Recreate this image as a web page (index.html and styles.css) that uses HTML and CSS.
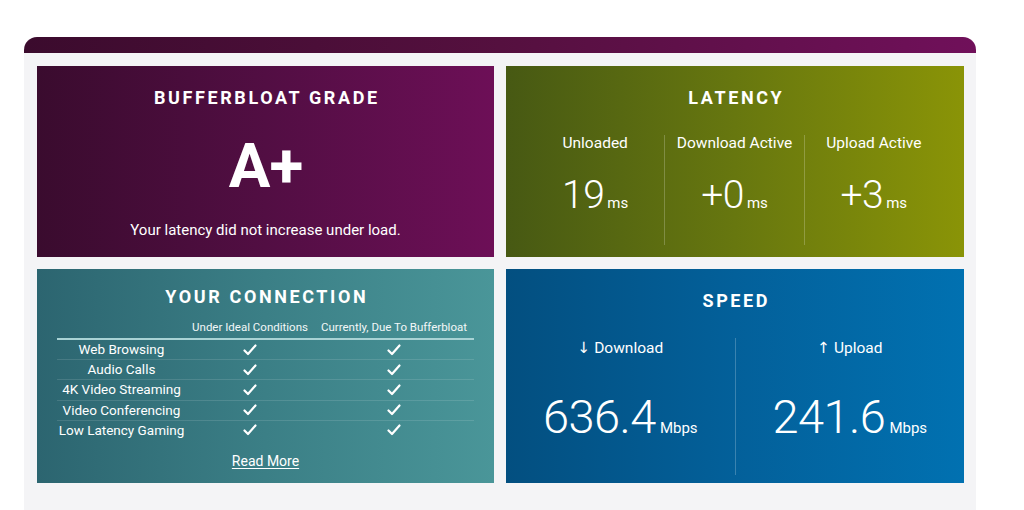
FILE: index.html
```html
<!DOCTYPE html>
<html lang="en">
<head>
<meta charset="utf-8">
<title>Bufferbloat Results</title>
<link rel="stylesheet" href="styles.css">
</head>
<body>
<div class="wrap">
  <div class="topbar"></div>
  <div class="panel">
    <div class="grid">
      <section class="card grade">
        <h2 class="title">BUFFERBLOAT GRADE</h2>
        <div class="big">A+</div>
        <p class="desc">Your latency did not increase under load.</p>
      </section>

      <section class="card latency">
        <h2 class="title">LATENCY</h2>
        <div class="cols three">
          <div class="col">
            <div class="label">Unloaded</div>
            <div class="value">19<span class="unit">ms</span></div>
          </div>
          <div class="col">
            <div class="label">Download Active</div>
            <div class="value">+0<span class="unit">ms</span></div>
          </div>
          <div class="col">
            <div class="label">Upload Active</div>
            <div class="value">+3<span class="unit">ms</span></div>
          </div>
        </div>
      </section>

      <section class="card connection">
        <h2 class="title ctitle">YOUR CONNECTION</h2>
        <div class="table">
          <div class="thead">
            <span></span>
            <span>Under Ideal Conditions</span>
            <span>Currently, Due To Bufferbloat</span>
          </div>
          <div class="trow"><span>Web Browsing</span><span class="ok"><svg viewBox="0 0 14 12" width="14" height="12"><path d="M1.5 6.5 L5 10 L12.5 1.5" fill="none" stroke="#fff" stroke-width="2.2" stroke-linecap="round" stroke-linejoin="round"/></svg></span><span class="ok"><svg viewBox="0 0 14 12" width="14" height="12"><path d="M1.5 6.5 L5 10 L12.5 1.5" fill="none" stroke="#fff" stroke-width="2.2" stroke-linecap="round" stroke-linejoin="round"/></svg></span></div>
          <div class="trow"><span>Audio Calls</span><span class="ok"><svg viewBox="0 0 14 12" width="14" height="12"><path d="M1.5 6.5 L5 10 L12.5 1.5" fill="none" stroke="#fff" stroke-width="2.2" stroke-linecap="round" stroke-linejoin="round"/></svg></span><span class="ok"><svg viewBox="0 0 14 12" width="14" height="12"><path d="M1.5 6.5 L5 10 L12.5 1.5" fill="none" stroke="#fff" stroke-width="2.2" stroke-linecap="round" stroke-linejoin="round"/></svg></span></div>
          <div class="trow"><span>4K Video Streaming</span><span class="ok"><svg viewBox="0 0 14 12" width="14" height="12"><path d="M1.5 6.5 L5 10 L12.5 1.5" fill="none" stroke="#fff" stroke-width="2.2" stroke-linecap="round" stroke-linejoin="round"/></svg></span><span class="ok"><svg viewBox="0 0 14 12" width="14" height="12"><path d="M1.5 6.5 L5 10 L12.5 1.5" fill="none" stroke="#fff" stroke-width="2.2" stroke-linecap="round" stroke-linejoin="round"/></svg></span></div>
          <div class="trow"><span>Video Conferencing</span><span class="ok"><svg viewBox="0 0 14 12" width="14" height="12"><path d="M1.5 6.5 L5 10 L12.5 1.5" fill="none" stroke="#fff" stroke-width="2.2" stroke-linecap="round" stroke-linejoin="round"/></svg></span><span class="ok"><svg viewBox="0 0 14 12" width="14" height="12"><path d="M1.5 6.5 L5 10 L12.5 1.5" fill="none" stroke="#fff" stroke-width="2.2" stroke-linecap="round" stroke-linejoin="round"/></svg></span></div>
          <div class="trow"><span>Low Latency Gaming</span><span class="ok"><svg viewBox="0 0 14 12" width="14" height="12"><path d="M1.5 6.5 L5 10 L12.5 1.5" fill="none" stroke="#fff" stroke-width="2.2" stroke-linecap="round" stroke-linejoin="round"/></svg></span><span class="ok"><svg viewBox="0 0 14 12" width="14" height="12"><path d="M1.5 6.5 L5 10 L12.5 1.5" fill="none" stroke="#fff" stroke-width="2.2" stroke-linecap="round" stroke-linejoin="round"/></svg></span></div>
        </div>
        <a class="more" href="#">Read More</a>
      </section>

      <section class="card speed">
        <h2 class="title">SPEED</h2>
        <div class="cols two">
          <div class="col">
            <div class="label">&#8595; Download</div>
            <div class="value svalue">636.4<span class="unit">Mbps</span></div>
          </div>
          <div class="col">
            <div class="label">&#8593; Upload</div>
            <div class="value svalue">241.6<span class="unit">Mbps</span></div>
          </div>
        </div>
      </section>
    </div>
  </div>
</div>
</body>
</html>
```

FILE: styles.css
```css
* { box-sizing: border-box; }

html, body {
  margin: 0;
  padding: 0;
  background: #ffffff;
}

body {
  font-family: Roboto, "Open Sans", "DejaVu Sans", sans-serif;
  color: #ffffff;
}

.wrap {
  width: 952px;
  margin-left: 24px;
  padding-top: 37px;
}

.topbar {
  height: 16px;
  border-radius: 13px 13px 0 0;
  background: linear-gradient(90deg, #3b0b2d 0%, #55103f 50%, #70105a 100%);
}

.panel {
  background: #f4f4f6;
  padding: 13px 12px 40px 13px;
}

.grid {
  display: grid;
  grid-template-columns: 457px 458px;
  grid-template-rows: 191px 214px;
  gap: 12px;
}

.card {
  display: flex;
  flex-direction: column;
  align-items: center;
  text-align: center;
  padding-top: 21px;
}

.grade {
  background: linear-gradient(90deg, #3a0b2e 0%, #520e43 50%, #6d0f57 100%);
}

.latency {
  background: linear-gradient(90deg, #475913 0%, #67770f 50%, #8a9407 100%);
}

.connection {
  background: linear-gradient(90deg, #2c6570 0%, #3b7f86 50%, #4a9699 100%);
  padding-top: 17px;
}

.speed {
  background: linear-gradient(90deg, #034f80 0%, #03609a 50%, #0171b1 100%);
}

.title {
  margin: 0;
  font-size: 18px;
  line-height: 22px;
  font-weight: 700;
  letter-spacing: 2.6px;
  padding-left: 2.6px;
}

.big {
  margin-top: 25px;
  font-size: 62px;
  line-height: 63px;
  font-weight: 700;
  letter-spacing: -1px;
}

.desc {
  margin: 23px 0 0;
  font-size: 15px;
  line-height: 20px;
}

.cols {
  display: flex;
  margin-top: 26px;
  align-self: stretch;
}

.cols.three {
  padding: 0 21px 0 20px;
}

.cols.three .label {
  margin-top: -2px;
}

.col {
  flex: 1 1 0;
  display: flex;
  flex-direction: column;
  align-items: center;
}

.col + .col {
  border-left: 1px solid rgba(255, 255, 255, 0.22);
}

.label {
  font-size: 15.5px;
  line-height: 20px;
}

.value {
  margin-top: 23px;
  margin-bottom: 22px;
  font-size: 39px;
  line-height: 39px;
  font-weight: 300;
  letter-spacing: -0.5px;
}

.unit {
  font-size: 15px;
  font-weight: 400;
  margin-left: 3px;
  letter-spacing: 0;
}

.svalue {
  margin-top: 34px;
  font-size: 47px;
  line-height: 49px;
  letter-spacing: -0.5px;
}

.svalue .unit {
  font-size: 15px;
  margin-left: 4px;
}

.ctitle {
  font-size: 18px;
}

.table {
  align-self: stretch;
  margin: 11px 20px 0 20px;
}

.thead,
.trow {
  display: grid;
  grid-template-columns: 129px 128px 1fr;
  align-items: center;
  justify-items: center;
}

.thead {
  font-size: 11.5px;
  line-height: 16px;
  padding-bottom: 3px;
  border-bottom: 2px solid #a9d3d5;
  color: #f2f7f7;
}

.trow {
  font-size: 13.5px;
  line-height: 19.2px;
  height: 19.2px;
}

.trow + .trow {
  border-top: 1px solid rgba(255, 255, 255, 0.12);
  height: 20.2px;
}

.ok {
  display: flex;
  align-items: center;
  height: 19.2px;
}

.ok svg {
  display: block;
}

.more {
  margin-top: 12px;
  font-size: 14px;
  line-height: 18px;
  color: #ffffff;
  text-decoration: underline;
  text-underline-offset: 2px;
}
```
